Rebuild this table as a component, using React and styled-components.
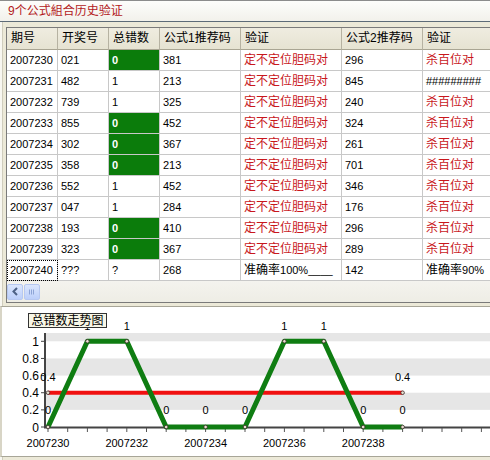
import React from "react";
import styled, { createGlobalStyle } from "styled-components";

const GlobalStyle = createGlobalStyle`
  html, body { margin: 0; padding: 0; background: #ece9d8; }
  body { font-family: "Liberation Sans", "Noto Sans CJK SC", sans-serif; }
`;

const Window = styled.div`
  width: 490px;
  height: 460px;
  overflow: hidden;
  display: flex;
  flex-direction: column;
  background: #ece9d8;
  box-sizing: border-box;
`;

const TitleBar = styled.div`
  height: 22px;
  box-sizing: border-box;
  border-top: 1px solid #8c8c8c;
  border-bottom: 1px solid #5d6b78;
  background: linear-gradient(#fdfdfb, #f2f1eb);
  color: #b3191c;
  font-size: 12px;
  line-height: 21px;
  padding-left: 8px;
  display: flex;
  align-items: center;
`;

const Body = styled.div`
  flex: 1;
  display: flex;
  flex-direction: column;
  padding: 5px 0 0 0;
  border-left: 2px solid #f8f7f1;
  box-shadow: inset 1px 0 0 #d0cdbd;
`;

const GridFrame = styled.div`
  margin-left: 4px;
  border: 1px solid #7a7a7a;
  border-right: none;
  overflow: hidden;
  background: #f1f0e9;
`;

const Table = styled.div`
  display: grid;
  grid-template-columns: 51px 51px 51px 81px 101px 81px 100px;
  width: 516px;
`;

const HeadCell = styled.div`
  height: 22px;
  box-sizing: border-box;
  background: linear-gradient(#efece0, #e6e3d2);
  border-right: 1px solid #b6b2a2;
  border-bottom: 1px solid #a9a593;
  font-size: 12px;
  line-height: 21px;
  padding-left: 4px;
  color: #000;
  white-space: nowrap;
`;

const Cell = styled.div`
  height: 21px;
  box-sizing: border-box;
  border-right: 1px solid #c8c8c8;
  border-bottom: 1px solid #c8c8c8;
  background: ${(p) => (p.$green ? "#0b7c0b" : "#ffffff")};
  color: ${(p) => (p.$green ? "#ffffff" : p.$red ? "#c8171c" : "#000")};
  font-weight: ${(p) => (p.$green ? "bold" : "normal")};
  font-size: ${(p) => (p.$cn ? "12px" : "11px")};
  line-height: 20px;
  padding-left: 3px;
  white-space: nowrap;
  overflow: hidden;
  outline: ${(p) => (p.$focus ? "1px dotted #000" : "none")};
  outline-offset: -1px;
`;

const ScrollTrack = styled.div`
  height: 21px;
  box-sizing: border-box;
  display: flex;
  align-items: center;
  gap: 1px;
  background: linear-gradient(#f4f3ee, #eeede5);
`;

const ScrollBtn = styled.div`
  width: 16px;
  height: 16px;
  box-sizing: border-box;
  border: 1px solid #b7c8f0;
  border-radius: 2px;
  background: linear-gradient(#dbe6fd, #bccffa);
  display: flex;
  align-items: center;
  justify-content: center;
`;

const ChartPanel = styled.div`
  margin-top: 3px;
  height: 149px;
  background: #fff;
  border-top: 1px solid #a8a698;
  border-bottom: 1px solid #a8a698;
  margin-left: -2px;
  border-left: 2px solid #d8d5c6;
`;

const Cn = styled.span`
  font-size: 12px;
`;

const rows = [
  ["2007230", "021", "0", "381", "定不定位胆码对", "296", "杀百位对"],
  ["2007231", "482", "1", "213", "定不定位胆码对", "845", "#########"],
  ["2007232", "739", "1", "325", "定不定位胆码对", "240", "杀百位对"],
  ["2007233", "855", "0", "452", "定不定位胆码对", "324", "杀百位对"],
  ["2007234", "302", "0", "367", "定不定位胆码对", "261", "杀百位对"],
  ["2007235", "358", "0", "213", "定不定位胆码对", "701", "杀百位对"],
  ["2007236", "552", "1", "452", "定不定位胆码对", "346", "杀百位对"],
  ["2007237", "047", "1", "284", "定不定位胆码对", "176", "杀百位对"],
  ["2007238", "193", "0", "410", "定不定位胆码对", "296", "杀百位对"],
  ["2007239", "323", "0", "367", "定不定位胆码对", "289", "杀百位对"],
];

const headers = ["期号", "开奖号", "总错数", "公式1推荐码", "验证", "公式2推荐码", "验证"];

const values = [0, 1, 1, 0, 0, 0, 1, 1, 0, 0];
const X0 = 48;
const STEP = 39.4;
const Y0 = 427;
const UNIT = 85.7;
const px = (i) => X0 + STEP * i;
const py = (v) => Y0 - v * UNIT;

function Chart() {
  const pts = values.map((v, i) => `${px(i)},${py(v)}`).join(" ");
  const yTicks = [0, 0.2, 0.4, 0.6, 0.8, 1];
  const font = { fontFamily: "Liberation Sans, sans-serif", fontSize: 11 };
  const yFont = { fontFamily: "Liberation Sans, sans-serif", fontSize: 12 };
  return (
    <svg width="488" height="147" viewBox="2 307 488 147" style={{ display: "block" }}>
      <rect x="45" y="333" width="445" height={py(1) - 333} fill="#e6e6e6" />
      <rect x="45" y={py(0.8)} width="445" height={py(0.6) - py(0.8)} fill="#e6e6e6" />
      <rect x="45" y={py(0.4)} width="445" height={py(0.2) - py(0.4)} fill="#e6e6e6" />
      <line x1="45" y1="333" x2="45" y2="428" stroke="#444" strokeWidth="2" />
      <line x1="44" y1={Y0 + 0.5} x2="490" y2={Y0 + 0.5} stroke="#444" strokeWidth="2" />
      {yTicks.map((t) => (
        <g key={t}>
          <line x1="41" y1={py(t)} x2="45" y2={py(t)} stroke="#444" strokeWidth="1" />
          <text x="39" y={py(t) + 4.5} textAnchor="end" style={yFont} fill="#000">
            {t === 0 || t === 1 ? String(t) : t.toFixed(1)}
          </text>
        </g>
      ))}
      {Array.from({ length: 23 }, (_, k) => (
        <line key={k} x1={X0 + 19.7 * k} y1="428" x2={X0 + 19.7 * k} y2="432" stroke="#555" strokeWidth="1" />
      ))}
      {[0, 2, 4, 6, 8].map((i) => (
        <text key={i} x={px(i)} y="447" textAnchor="middle" style={font} fill="#000">
          {`200723${i}`}
        </text>
      ))}
      <line x1={px(0)} y1={py(0.4)} x2={px(9)} y2={py(0.4)} stroke="#f01010" strokeWidth="4" />
      <polyline points={pts} fill="none" stroke="#0f7d12" strokeWidth="5" strokeLinejoin="round" />
      {values.map((v, i) => (
        <circle key={i} cx={px(i)} cy={py(v)} r="1.8" fill="#e8e0d0" stroke="#3a2a2a" strokeWidth="0.8" />
      ))}
      <circle cx={px(0)} cy={py(0.4)} r="1.8" fill="#e8e0d0" stroke="#3a2a2a" strokeWidth="0.8" />
      <circle cx={px(9)} cy={py(0.4)} r="1.8" fill="#e8e0d0" stroke="#3a2a2a" strokeWidth="0.8" />
      {values.map((v, i) => (
        <text key={i} x={px(i)} y={v === 1 ? 330 : 414} textAnchor="middle" style={font} fill="#000">
          {v}
        </text>
      ))}
      <text x={px(0)} y="381" textAnchor="middle" style={font} fill="#000">0.4</text>
      <text x={px(9)} y="381" textAnchor="middle" style={font} fill="#000">0.4</text>
      <rect x="28.5" y="313.5" width="78" height="14" fill="#f7f6e6" stroke="#333" strokeWidth="1" />
      <text
        x="67.5"
        y="325"
        textAnchor="middle"
        style={{ fontFamily: "Noto Sans CJK SC, sans-serif", fontSize: 12 }}
        fill="#000"
      >
        总错数走势图
      </text>
    </svg>
  );
}

export default function App() {
  return (
    <Window>
      <GlobalStyle />
      <TitleBar>9个公式組合历史验证</TitleBar>
      <Body>
        <GridFrame>
          <Table>
            {headers.map((h, i) => (
              <HeadCell key={i}>{h}</HeadCell>
            ))}
            {rows.map((r, ri) =>
              r.map((c, ci) => (
                <Cell
                  key={`${ri}-${ci}`}
                  $green={ci === 2 && c === "0"}
                  $red={(ci === 4 || ci === 6) && c !== "#########"}
                  $cn={ci === 4 || (ci === 6 && c !== "#########")}
                >
                  {c}
                </Cell>
              ))
            )}
            <Cell $focus>2007240</Cell>
            <Cell>???</Cell>
            <Cell>?</Cell>
            <Cell>268</Cell>
            <Cell>
              <Cn>准确率</Cn>100%____
            </Cell>
            <Cell>142</Cell>
            <Cell>
              <Cn>准确率</Cn>90%
            </Cell>
          </Table>
          <ScrollTrack>
            <ScrollBtn>
              <svg width="8" height="9" viewBox="0 0 8 9">
                <path d="M6 1 L2.5 4.5 L6 8" fill="none" stroke="#4d6185" strokeWidth="2" />
              </svg>
            </ScrollBtn>
            <ScrollBtn>
              <svg width="8" height="8" viewBox="0 0 8 8">
                <path d="M1.5 1.5V6.5M3.5 1.5V6.5M5.5 1.5V6.5" stroke="#8da4d6" strokeWidth="1" />
              </svg>
            </ScrollBtn>
          </ScrollTrack>
        </GridFrame>
        <ChartPanel>
          <Chart />
        </ChartPanel>
      </Body>
    </Window>
  );
}
